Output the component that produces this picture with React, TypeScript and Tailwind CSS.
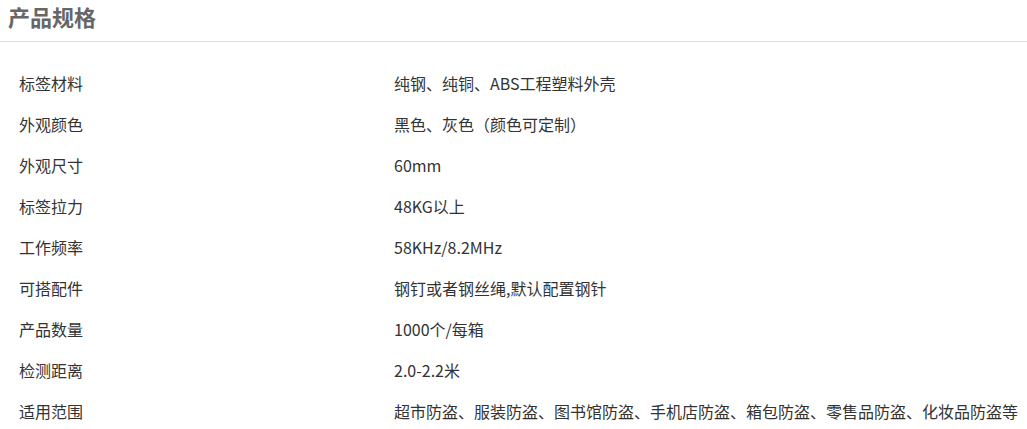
const specs: [string, string][] = [
  ['标签材料', '纯钢、纯铜、ABS工程塑料外壳'],
  ['外观颜色', '黑色、灰色（颜色可定制）'],
  ['外观尺寸', '60mm'],
  ['标签拉力', '48KG以上'],
  ['工作频率', '58KHz/8.2MHz'],
  ['可搭配件', '钢钉或者钢丝绳,默认配置钢针'],
  ['产品数量', '1000个/每箱'],
  ['检测距离', '2.0-2.2米'],
  ['适用范围', '超市防盗、服装防盗、图书馆防盗、手机店防盗、箱包防盗、零售品防盗、化妆品防盗等'],
];

export default function App() {
  return (
    <div
      className="w-[1027px] h-[429px] overflow-hidden bg-white"
      style={{ fontFamily: '"Noto Sans CJK SC", "Noto Sans", sans-serif' }}
    >
      <div className="h-[42px] border-b border-[#e1e1e1]">
        <h2 className="pl-[8px] pt-[2px] text-[22px] leading-[28px] font-bold text-[#666]">产品规格</h2>
      </div>
      <div className="pt-[20px]">
        {specs.map(([label, value]) => (
          <div key={label} className="flex h-[41px] items-center text-[16px] text-[#333]">
            <div className="w-[394px] shrink-0 pl-[19px]">{label}</div>
            <div className="whitespace-nowrap">{value}</div>
          </div>
        ))}
      </div>
    </div>
  );
}
